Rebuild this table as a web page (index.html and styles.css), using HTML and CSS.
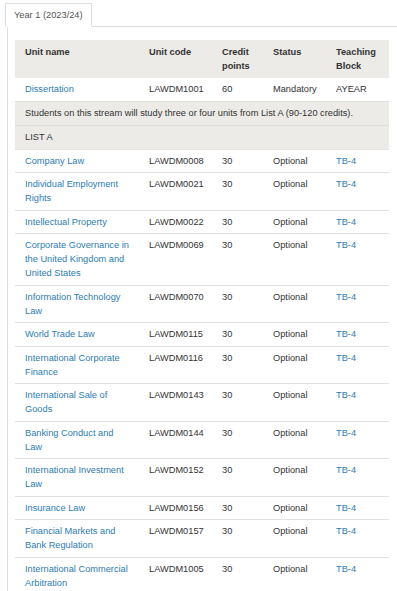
FILE: index.html
```html
<!DOCTYPE html>
<html>
<head>
<meta charset="utf-8">
<link rel="stylesheet" href="styles.css">
</head>
<body>
<div class="tabs">
  <div class="tab">Year 1 (2023/24)</div>
</div>
<div class="panel">
  <table class="units">
    <colgroup>
      <col class="c1"><col class="c2"><col class="c3"><col class="c4"><col class="c5">
    </colgroup>
    <thead>
      <tr><th>Unit name</th><th>Unit code</th><th>Credit points</th><th>Status</th><th>Teaching Block</th></tr>
    </thead>
    <tbody>
      <tr><td><a href="#">Dissertation</a></td><td>LAWDM1001</td><td>60</td><td>Mandatory</td><td>AYEAR</td></tr>
      <tr class="note"><td colspan="5">Students on this stream will study three or four units from List A (90-120 credits).</td></tr>
      <tr class="note"><td colspan="5">LIST A</td></tr>
      <tr><td><a href="#">Company Law</a></td><td>LAWDM0008</td><td>30</td><td>Optional</td><td><a href="#">TB-4</a></td></tr>
      <tr><td><a href="#">Individual Employment Rights</a></td><td>LAWDM0021</td><td>30</td><td>Optional</td><td><a href="#">TB-4</a></td></tr>
      <tr><td><a href="#">Intellectual Property</a></td><td>LAWDM0022</td><td>30</td><td>Optional</td><td><a href="#">TB-4</a></td></tr>
      <tr><td><a href="#">Corporate Governance in the United Kingdom and United States</a></td><td>LAWDM0069</td><td>30</td><td>Optional</td><td><a href="#">TB-4</a></td></tr>
      <tr><td><a href="#">Information Technology Law</a></td><td>LAWDM0070</td><td>30</td><td>Optional</td><td><a href="#">TB-4</a></td></tr>
      <tr><td><a href="#">World Trade Law</a></td><td>LAWDM0115</td><td>30</td><td>Optional</td><td><a href="#">TB-4</a></td></tr>
      <tr><td><a href="#">International Corporate Finance</a></td><td>LAWDM0116</td><td>30</td><td>Optional</td><td><a href="#">TB-4</a></td></tr>
      <tr><td><a href="#">International Sale of Goods</a></td><td>LAWDM0143</td><td>30</td><td>Optional</td><td><a href="#">TB-4</a></td></tr>
      <tr><td><a href="#">Banking Conduct and Law</a></td><td>LAWDM0144</td><td>30</td><td>Optional</td><td><a href="#">TB-4</a></td></tr>
      <tr><td><a href="#">International Investment Law</a></td><td>LAWDM0152</td><td>30</td><td>Optional</td><td><a href="#">TB-4</a></td></tr>
      <tr><td><a href="#">Insurance Law</a></td><td>LAWDM0156</td><td>30</td><td>Optional</td><td><a href="#">TB-4</a></td></tr>
      <tr><td><a href="#">Financial Markets and Bank Regulation</a></td><td>LAWDM0157</td><td>30</td><td>Optional</td><td><a href="#">TB-4</a></td></tr>
      <tr><td><a href="#">International Commercial Arbitration</a></td><td>LAWDM1005</td><td>30</td><td>Optional</td><td><a href="#">TB-4</a></td></tr>
    </tbody>
  </table>
</div>
</body>
</html>
```
FILE: styles.css
```css
html, body {
  margin: 0;
  padding: 0;
  background: #fff;
}
body {
  font-family: "Liberation Sans", Arial, sans-serif;
  font-size: 9.25px;
  line-height: 14px;
  color: #333;
  overflow: hidden;
}
.tabs {
  display: flex;
  padding: 3px 0 0 5px;
  margin-bottom: -1px;
  position: relative;
  z-index: 1;
}
.tab {
  border: 1px solid #ddd;
  border-bottom-color: #fff;
  background: #fff;
  padding: 4px 8px 4px 8px;
  height: 14px;
  line-height: 14px;
  color: #555;
}
.panel {
  margin-left: 7px;
  border-left: 1px solid #ddd;
  border-top: 1px solid #ddd;
  padding: 13px 0 0 7px;
}
.units {
  border-collapse: collapse;
  table-layout: fixed;
  width: 374px;
}
.c1 { width: 124px; }
.c2 { width: 73px; }
.c3 { width: 51px; }
.c4 { width: 63px; }
.c5 { width: 63px; }
.units th {
  background: #ecebe8;
  text-align: left;
  font-weight: bold;
  vertical-align: top;
  padding: 5px 10px 5px 10px;
  color: #333;
}
.units td {
  vertical-align: top;
  padding: 4.25px 10px 4.25px 10px;
  border-top: 1px solid #e3e1dd;
}
.units thead + tbody tr:first-child td {
  border-top: none;
}
.units tr.note td {
  background: #ecebe8;
  border-top: 1px solid #e0ded9;
  padding: 4.5px 10px;
}
.units a {
  color: #2b7cb3;
  text-decoration: none;
}
```
